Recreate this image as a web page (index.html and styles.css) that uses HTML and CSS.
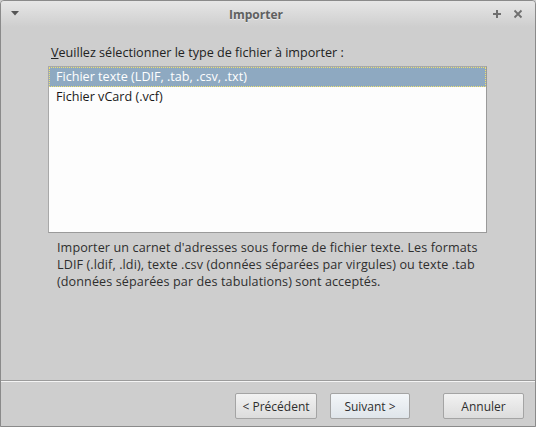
FILE: index.html
```html
<!DOCTYPE html>
<html>
<head>
<meta charset="utf-8">
<link rel="stylesheet" href="styles.css">
</head>
<body>
<div class="window">
  <div class="titlebar">
    <svg class="menu-icon" width="8" height="5" viewBox="0 0 8 5"><path d="M0 0H8L4 4.5Z" fill="#555"/></svg>
    <span class="title">Importer</span>
    <div class="tb-buttons">
      <svg width="10" height="10" viewBox="0 0 10 10"><path d="M5 1V9M1 5H9" stroke="#6f6f6f" stroke-width="2"/></svg>
      <svg width="10" height="10" viewBox="0 0 10 10"><path d="M1.5 1.5L8.5 8.5M8.5 1.5L1.5 8.5" stroke="#6f6f6f" stroke-width="1.8"/></svg>
    </div>
  </div>
  <div class="content">
    <div class="label"><u>V</u>euillez sélectionner le type de fichier à importer :</div>
    <div class="list">
      <div class="row selected">Fichier texte (LDIF, .tab, .csv, .txt)</div>
      <div class="row">Fichier vCard (.vcf)</div>
    </div>
    <p class="desc">Importer un carnet d'adresses sous forme de fichier texte. Les formats<br>LDIF (.ldif, .ldi), texte .csv (données séparées par virgules) ou texte .tab<br>(données séparées par des tabulations) sont acceptés.</p>
  </div>
  <div class="sep"></div>
  <div class="footer">
    <button class="btn prev">&lt; Précédent</button>
    <button class="btn next">Suivant &gt;</button>
    <button class="btn cancel">Annuler</button>
  </div>
</div>
</body>
</html>
```
FILE: styles.css
```css
html, body {
  margin: 0;
  padding: 0;
  background: #cecece;
}
.window {
  width: 536px;
  height: 427px;
  box-sizing: border-box;
  border: 1px solid #8a8a8a;
  border-radius: 4px 4px 0 0;
  background: #cecece;
  display: flex;
  flex-direction: column;
  font-family: "Open Sans", sans-serif;
  font-size: 12.6px;
  color: #2b2b2b;
  overflow: hidden;
}
.titlebar {
  height: 26px;
  flex: none;
  background: linear-gradient(#e6e6e6, #cecece);
  display: flex;
  align-items: center;
  position: relative;
}
.menu-icon {
  margin-left: 10px;
  margin-top: -2px;
}
.title {
  position: absolute;
  left: 0;
  right: 24px;
  text-align: center;
  font-weight: bold;
  color: #606060;
  font-size: 12px;
  top: 5px;
  text-shadow: 0 1px 0 rgba(255,255,255,0.5);
}
.tb-buttons {
  margin-left: auto;
  margin-right: 12px;
  display: flex;
  gap: 11px;
  margin-top: -1px;
}
.content {
  flex: 1;
  padding: 17px 0 0 47px;
}
.label {
  line-height: 17px;
  margin-left: 3px;
  margin-bottom: 5px;
  color: #222;
}
.label u {
  text-decoration-thickness: 1px;
}
.list {
  width: 439px;
  height: 167px;
  box-sizing: border-box;
  background: #fdfdfd;
  border: 1px solid #a8a8a8;
  border-right-color: #9a9a9a;
  border-bottom-color: #9a9a9a;
}
.row {
  height: 20px;
  line-height: 20px;
  padding-left: 7px;
  color: #1a1a1a;
}
.row.selected {
  background: #8ea9c1;
  color: #ffffff;
  outline: 1px dotted #f0e070;
  outline-offset: -1px;
}
.desc {
  margin: 6px 0 0 9px;
  line-height: 17px;
  color: #2e2e2e;
  letter-spacing: 0.1px;
}
.sep {
  height: 1px;
  background: #9c9c9c;
  border-bottom: 1px solid #f4f4f4;
  flex: none;
}
.footer {
  height: 44px;
  flex: none;
  display: flex;
  align-items: flex-start;
  padding: 11px 11px 0 0;
  justify-content: flex-end;
  box-sizing: border-box;
}
.btn {
  height: 26px;
  box-sizing: border-box;
  border: 1px solid #a4a4a4;
  border-radius: 2px;
  background: linear-gradient(#f2f2f2, #dcdcdc);
  font-family: "Open Sans", sans-serif;
  font-size: 12px;
  color: #2e2e2e;
  padding: 0;
}
.prev { width: 82px; }
.next {
  width: 80px;
  margin-left: 13px;
  background: linear-gradient(#f3f6f9, #dfe5ea);
}
.cancel {
  width: 81px;
  margin-left: 33px;
}
```
